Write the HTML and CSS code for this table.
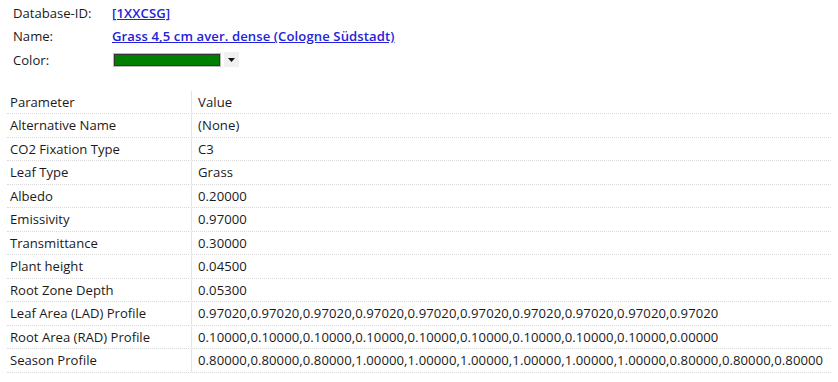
FILE: index.html
```html
<!DOCTYPE html>
<html>
<head>
<meta charset="utf-8">
<link rel="stylesheet" href="styles.css">
</head>
<body>
<div class="page">
  <div class="info">
    <div class="info-row"><span class="label">Database-ID:</span><a class="link" href="#">[1XXCSG]</a></div>
    <div class="info-row"><span class="label">Name:</span><a class="link" href="#">Grass 4,5 cm aver. dense (Cologne Südstadt)</a></div>
    <div class="info-row"><span class="label">Color:</span>
      <span class="color-picker"><span class="swatch"></span><span class="drop"><svg width="7" height="4" viewBox="0 0 7 4"><path d="M0 0H7L3.5 4Z" fill="#111"/></svg></span></span>
    </div>
  </div>
  <div class="grid">
    <div class="row head"><div class="c1">Parameter</div><div class="c2">Value</div></div>
    <div class="row"><div class="c1">Alternative Name</div><div class="c2">(None)</div></div>
    <div class="row"><div class="c1">CO2 Fixation Type</div><div class="c2">C3</div></div>
    <div class="row"><div class="c1">Leaf Type</div><div class="c2">Grass</div></div>
    <div class="row"><div class="c1">Albedo</div><div class="c2">0.20000</div></div>
    <div class="row"><div class="c1">Emissivity</div><div class="c2">0.97000</div></div>
    <div class="row"><div class="c1">Transmittance</div><div class="c2">0.30000</div></div>
    <div class="row"><div class="c1">Plant height</div><div class="c2">0.04500</div></div>
    <div class="row"><div class="c1">Root Zone Depth</div><div class="c2">0.05300</div></div>
    <div class="row"><div class="c1">Leaf Area (LAD) Profile</div><div class="c2">0.97020,0.97020,0.97020,0.97020,0.97020,0.97020,0.97020,0.97020,0.97020,0.97020</div></div>
    <div class="row"><div class="c1">Root Area (RAD) Profile</div><div class="c2">0.10000,0.10000,0.10000,0.10000,0.10000,0.10000,0.10000,0.10000,0.10000,0.00000</div></div>
    <div class="row"><div class="c1">Season Profile</div><div class="c2">0.80000,0.80000,0.80000,1.00000,1.00000,1.00000,1.00000,1.00000,1.00000,0.80000,0.80000,0.80000</div></div>
  </div>
</div>
</body>
</html>
```
FILE: styles.css
```css
html, body { margin: 0; padding: 0; background: #fff; }
body {
  font-family: "Open Sans", "Noto Sans", sans-serif;
  font-size: 13.1px;
  color: #1a1a1a;
}
.page { padding: 1px 0 0 7px; }
.info { padding-left: 6px; display: flex; flex-direction: column; }
.info-row { height: 23.5px; display: flex; align-items: center; }
.label { width: 99px; flex: none; }
.link { color: #2323d9; font-weight: 600; text-decoration: underline; letter-spacing: 0.1px; }
.color-picker { display: flex; align-items: center; margin-left: 2px; gap: 4px; }
.swatch { width: 104px; height: 10px; background: #008000; border: 1px solid #333; box-shadow: 0 0 0 1px #bbb; }
.drop { width: 15px; height: 15px; background: #f0f0f0; display: flex; align-items: center; justify-content: center; }
.grid { margin-top: 19px; width: 824px; }
.row { display: flex; height: 23.5px; border-bottom: 1px dotted #d9d9d9; box-sizing: border-box; }
.row .c1 { width: 181px; flex: none; padding-left: 3px; border-right: 1px solid #e3e3e3; display: flex; align-items: center; }
.row .c2 { padding-left: 6px; display: flex; align-items: center; white-space: nowrap; letter-spacing: 0.08px; }
```
